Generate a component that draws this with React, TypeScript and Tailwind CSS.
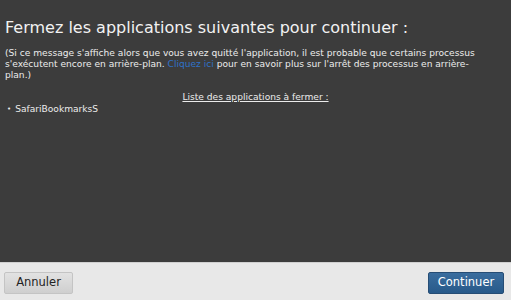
export default function App() {
  return (
    <div className="flex h-[300px] w-[511px] flex-col font-['DejaVu_Sans',sans-serif]">
      {/* message area */}
      <div className="flex h-[262px] flex-col bg-[#3c3c3c] px-[5px] pt-[18px] text-[#f2f2f2]">
        <h1 className="text-[16px] leading-[20px]">
          Fermez les applications suivantes pour continuer :
        </h1>
        <p className="mt-[10px] max-w-[476px] text-[9.1px] leading-[11px] text-[#ececec]">
          (Si ce message s'affiche alors que vous avez quitté l'application, il est probable que certains processus
          s'exécutent encore en arrière-plan. <span className="text-[#2f72c8]">Cliquez ici</span> pour en savoir plus
          sur l'arrêt des processus en arrière-plan.)
        </p>
        <p className="mt-[11px] text-center text-[9.1px] leading-[11px] text-[#ececec] underline">
          Liste des applications à fermer :
        </p>
        <ul className="mt-[1px] pl-[2px] text-[9.1px] leading-[11px] text-[#ececec]">
          <li className="flex items-center gap-[4px]">
            <span className="text-[7px]">•</span>
            SafariBookmarksS
          </li>
        </ul>
      </div>

      {/* footer */}
      <div className="flex flex-1 items-center justify-between border-t border-[#d0d0d0] bg-[#e8e8e8] px-[4px] pt-[3px]">
        <button className="h-[22px] w-[69px] rounded-[2px] border border-[#c4c4c4] bg-gradient-to-b from-[#e2e2e2] to-[#cfcfcf] text-[11.5px] text-[#222]">
          Annuler
        </button>
        <button className="mr-[3px] h-[22px] w-[76px] rounded-[2px] border border-[#264d75] bg-gradient-to-b from-[#3a6d9e] to-[#285a8a] text-[11.5px] text-white">
          Continuer
        </button>
      </div>
    </div>
  );
}
